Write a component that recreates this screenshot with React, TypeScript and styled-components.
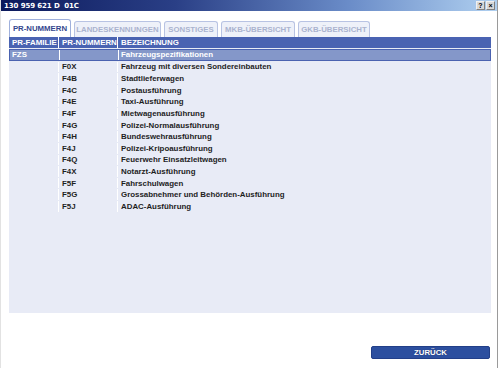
import React from "react";
import styled, { createGlobalStyle } from "styled-components";

const Global = createGlobalStyle`
  html, body { margin: 0; padding: 0; background: #ffffff; }
  body { font-family: "Liberation Sans", Arial, sans-serif; }
`;

const Window = styled.div`
  width: 498px;
  height: 368px;
  box-sizing: border-box;
  border-left: 1px solid #e2e2e2;
  border-right: 1px solid #9a9a9a;
  background: #ffffff;
  display: flex;
  flex-direction: column;
`;

const TitleBar = styled.div`
  height: 11px;
  background: linear-gradient(to right, #0c1a5c 0%, #2a3f86 35%, #6a8cc8 70%, #b0d0f0 100%);
  display: flex;
  align-items: center;
  justify-content: space-between;
  padding: 0 2px 0 3px;
`;

const Title = styled.span`
  color: #ffffff;
  font-family: Tahoma, "DejaVu Sans", sans-serif;
  font-weight: bold;
  font-size: 7px;
  letter-spacing: -0.1px;
  white-space: pre;
`;

const TitleButtons = styled.div`
  display: flex;
  gap: 1px;
`;

const TitleButton = styled.div`
  width: 7px;
  height: 7px;
  background: #d8d8d8;
  border: 1px solid #808080;
  border-top-color: #f0f0f0;
  border-left-color: #f0f0f0;
  font-size: 7px;
  line-height: 7px;
  font-weight: bold;
  text-align: center;
  color: #000;
`;

const Content = styled.div`
  flex: 1;
  display: flex;
  flex-direction: column;
  padding: 8px 6px 0 8px;
`;

const Tabs = styled.div`
  display: flex;
  gap: 3px;
  height: 18px;
  align-items: flex-end;
`;

const Tab = styled.div<{ $active?: boolean; $w: number }>`
  height: ${(p) => (p.$active ? 18 : 16)}px;
  box-sizing: border-box;
  border: 1px solid ${(p) => (p.$active ? "#9fb0dc" : "#b8c3e3")};
  border-bottom: none;
  border-radius: 3px 3px 0 0;
  background: ${(p) => (p.$active ? "#ffffff" : "#eef1f9")};
  color: ${(p) => (p.$active ? "#34478e" : "#aab3cf")};
  font-weight: bold;
  font-size: 7.8px;
  white-space: nowrap;
  display: flex;
  align-items: center;
  justify-content: center;
  width: ${(p) => p.$w}px;
`;

const Table = styled.div`
  width: 482px;
  height: 276px;
  background: #e8ebf6;
  display: flex;
  flex-direction: column;
`;

type Kind = "head" | "group" | "data";

const Row = styled.div<{ $kind: Kind }>`
  display: grid;
  grid-template-columns: 49px 58px 1fr;
  column-gap: 1px;
  height: ${(p) => (p.$kind === "head" ? 11 : p.$kind === "group" ? 11.6 : 10.64)}px;
  box-sizing: border-box;
  background: #ffffff;
  ${(p) => (p.$kind === "group" ? "border: 1px solid #4a62b0; margin-top: 1px;" : "")}
  ${(p) => (p.$kind === "data" ? "margin-top: 1px;" : "")}
`;

const Cell = styled.div<{ $kind: Kind }>`
  background: ${(p) => (p.$kind === "head" ? "#4a63b2" : p.$kind === "group" ? "#8497c9" : "#e8ebf6")};
  color: ${(p) => (p.$kind === "data" ? "#1e1e1e" : "#ffffff")};
  font-weight: bold;
  font-size: 7.9px;
  padding-left: ${(p) => (p.$kind === "group" ? 2 : 3)}px;
  display: flex;
  align-items: center;
  white-space: nowrap;
  overflow: hidden;
`;

const Footer = styled.div`
  flex: 1;
  display: flex;
  justify-content: flex-end;
  align-items: flex-start;
  padding-top: 33px;
`;

const BackButton = styled.div`
  width: 119px;
  height: 13px;
  margin-right: 1px;
  border-radius: 2px;
  background: #2c4f9f;
  border: 1px solid #223f88;
  box-sizing: border-box;
  color: #ffffff;
  font-weight: bold;
  font-size: 7.8px;
  display: flex;
  align-items: center;
  justify-content: center;
  text-shadow: 0 0 1px #1a2a60;
`;

const tabs: { label: string; w: number; active?: boolean }[] = [
  { label: "PR-NUMMERN", w: 62, active: true },
  { label: "LANDESKENNUNGEN", w: 87 },
  { label: "SONSTIGES", w: 54 },
  { label: "MKB-ÜBERSICHT", w: 74 },
  { label: "GKB-ÜBERSICHT", w: 72 },
];

const rows: [string, string][] = [
  ["F0X", "Fahrzeug mit diversen Sondereinbauten"],
  ["F4B", "Stadtlieferwagen"],
  ["F4C", "Postausführung"],
  ["F4E", "Taxi-Ausführung"],
  ["F4F", "Mietwagenausführung"],
  ["F4G", "Polizei-Normalausführung"],
  ["F4H", "Bundeswehrausführung"],
  ["F4J", "Polizei-Kripoausführung"],
  ["F4Q", "Feuerwehr Einsatzleitwagen"],
  ["F4X", "Notarzt-Ausführung"],
  ["F5F", "Fahrschulwagen"],
  ["F5G", "Grossabnehmer und Behörden-Ausführung"],
  ["F5J", "ADAC-Ausführung"],
];

export default function App() {
  return (
    <>
      <Global />
      <Window>
        <TitleBar>
          <Title>{"130 959 621 D  01C"}</Title>
          <TitleButtons>
            <TitleButton>?</TitleButton>
            <TitleButton>×</TitleButton>
          </TitleButtons>
        </TitleBar>
        <Content>
          <Tabs>
            {tabs.map((t) => (
              <Tab key={t.label} $active={t.active} $w={t.w}>
                {t.label}
              </Tab>
            ))}
          </Tabs>
          <Table>
            <Row $kind="head">
              <Cell $kind="head">PR-FAMILIE</Cell>
              <Cell $kind="head">PR-NUMMERN</Cell>
              <Cell $kind="head">BEZEICHNUNG</Cell>
            </Row>
            <Row $kind="group">
              <Cell $kind="group">FZS</Cell>
              <Cell $kind="group"></Cell>
              <Cell $kind="group">Fahrzeugspezifikationen</Cell>
            </Row>
            {rows.map(([code, name]) => (
              <Row $kind="data" key={code}>
                <Cell $kind="data"></Cell>
                <Cell $kind="data">{code}</Cell>
                <Cell $kind="data">{name}</Cell>
              </Row>
            ))}
          </Table>
          <Footer>
            <BackButton>ZURÜCK</BackButton>
          </Footer>
        </Content>
      </Window>
    </>
  );
}
